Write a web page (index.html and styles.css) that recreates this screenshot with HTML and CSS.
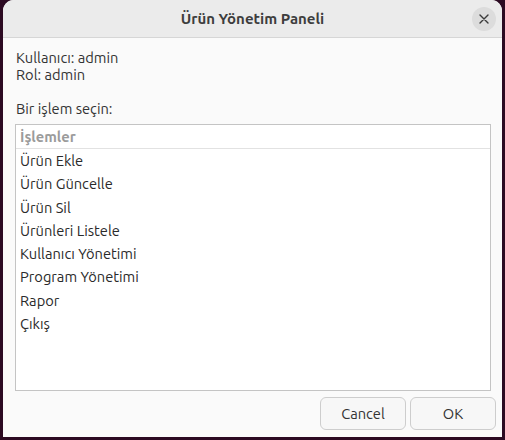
FILE: index.html
```html
<!DOCTYPE html>
<html lang="tr">
<head>
<meta charset="utf-8">
<title>Ürün Yönetim Paneli</title>
<link rel="stylesheet" href="styles.css">
</head>
<body>
<div class="dialog">
  <header class="titlebar">
    <span class="title">Ürün Yönetim Paneli</span>
    <button class="close" aria-label="Kapat">
      <svg width="10" height="10" viewBox="0 0 10 10"><path d="M1 1L9 9M9 1L1 9" stroke="#3a3a3a" stroke-width="1.4" stroke-linecap="round"/></svg>
    </button>
  </header>
  <main class="content">
    <div class="info">
      <div>Kullanıcı: admin</div>
      <div>Rol: admin</div>
    </div>
    <div class="prompt">Bir işlem seçin:</div>
    <div class="list">
      <div class="list-head">İşlemler</div>
      <div class="row">Ürün Ekle</div>
      <div class="row">Ürün Güncelle</div>
      <div class="row">Ürün Sil</div>
      <div class="row">Ürünleri Listele</div>
      <div class="row">Kullanıcı Yönetimi</div>
      <div class="row">Program Yönetimi</div>
      <div class="row">Rapor</div>
      <div class="row">Çıkış</div>
    </div>
    <div class="actions">
      <button class="btn">Cancel</button>
      <button class="btn">OK</button>
    </div>
  </main>
</div>
</body>
</html>
```
FILE: styles.css
```css
html, body {
  margin: 0;
  padding: 0;
  background: #2c0a22;
  height: 440px;
  overflow: hidden;
}
body {
  font-family: "Ubuntu", "Noto Sans", "Open Sans", sans-serif;
  font-size: 14.67px;
  color: #333333;
}
.dialog {
  margin: 0 3px 0 3px;
  width: 499px;
  height: 437px;
  background: #fafafa;
  border-radius: 11px 11px 0 0;
  display: flex;
  flex-direction: column;
  overflow: hidden;
}
.titlebar {
  flex: none;
  background: #ebebeb;
  border-bottom: 1px solid #d6d6d6;
  box-sizing: border-box;
  height: 38px;
  display: flex;
  align-items: center;
  justify-content: center;
  position: relative;
}
.title {
  font-weight: bold;
  font-size: 15px;
  color: #3d3d3d;
}
.close {
  position: absolute;
  right: 6px;
  top: 7px;
  width: 24px;
  height: 24px;
  border-radius: 50%;
  border: none;
  background: #dcdcdc;
  padding: 0;
  display: flex;
  align-items: center;
  justify-content: center;
}
.content {
  flex: 1;
  display: flex;
  flex-direction: column;
  padding: 11px 6px 7px 12px;
}
.info {
  line-height: 17px;
  padding-left: 1px;
}
.prompt {
  margin-top: 17px;
  line-height: 17px;
  padding-left: 1px;
}
.list {
  margin-top: 7px;
  height: 267px;
  flex: none;
  box-sizing: border-box;
  background: #ffffff;
  border: 1px solid #c4c4c4;
  margin-right: 5px;
}
.list-head {
  height: 23px;
  line-height: 23px;
  padding-left: 4px;
  font-weight: bold;
  color: #9b9b9b;
  border-bottom: 1px solid #e2e2e2;
}
.row {
  height: 23.3px;
  line-height: 23.3px;
  padding-left: 4px;
  color: #2a2a2a;
}
.actions {
  margin-top: 6px;
  display: flex;
  justify-content: flex-end;
  gap: 4px;
}
.btn {
  width: 86px;
  height: 33px;
  font-family: inherit;
  font-size: 14.67px;
  color: #333;
  background: #f7f7f7;
  border: 1px solid #cdcdcd;
  border-radius: 6px;
}
```
